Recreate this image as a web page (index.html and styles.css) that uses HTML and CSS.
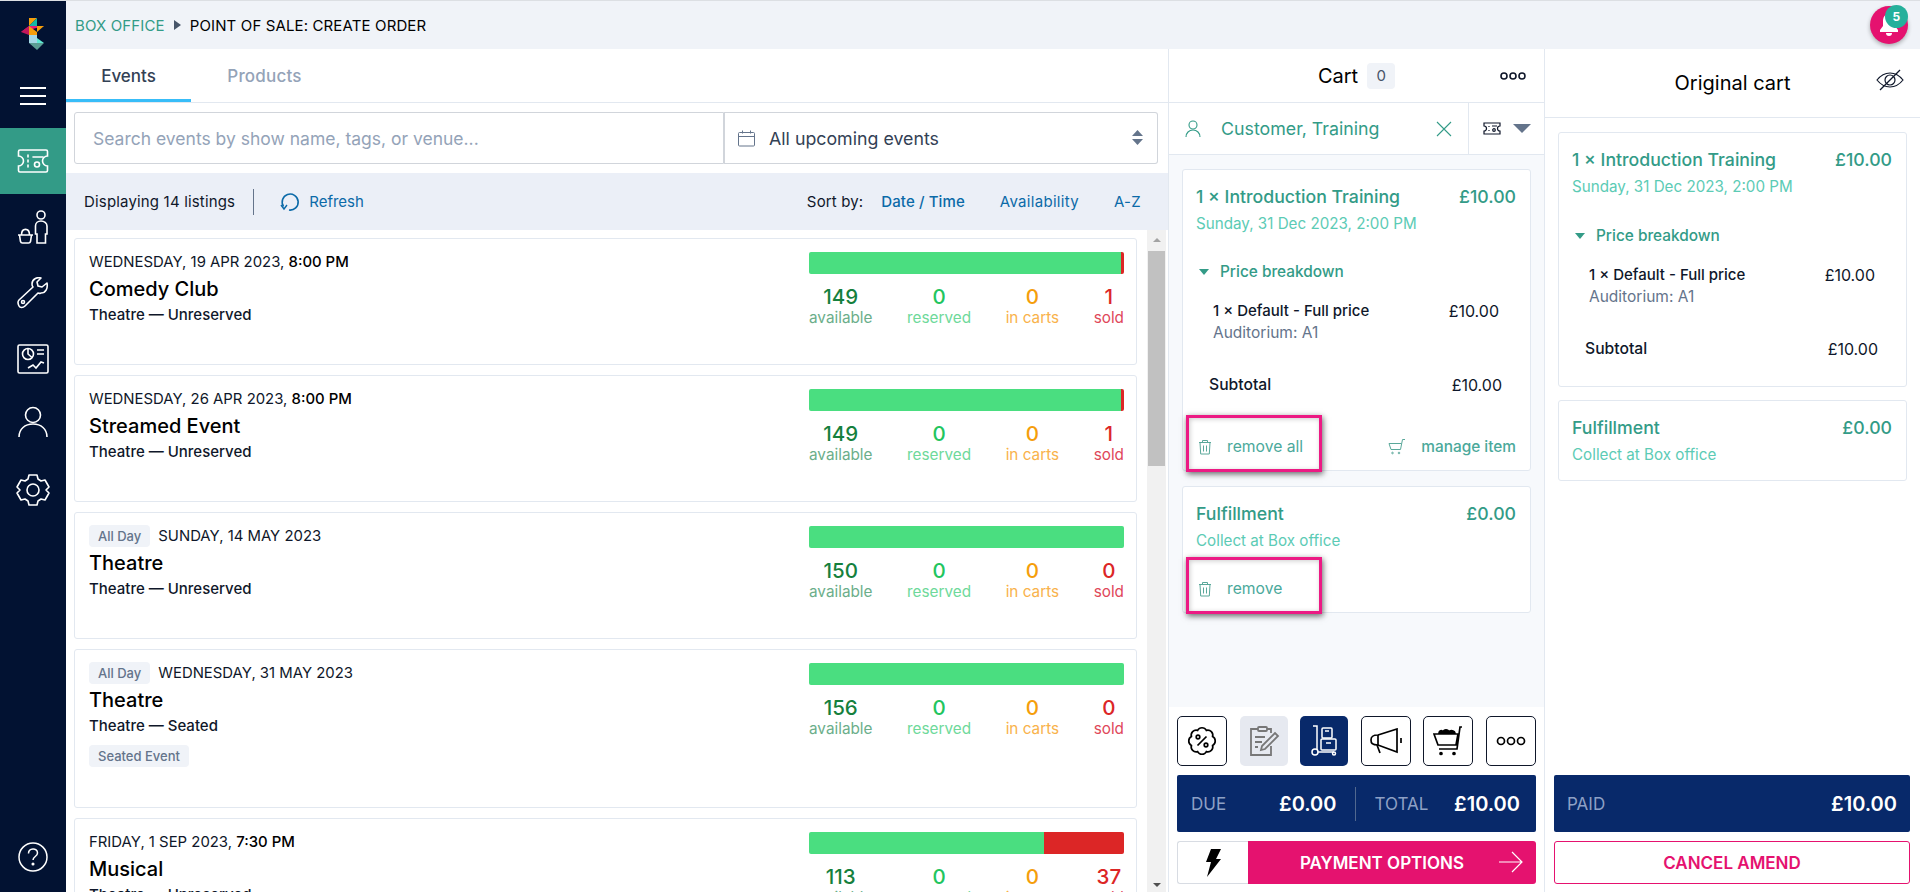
FILE: index.html
```html
<!DOCTYPE html>
<html lang="en">
<head>
<meta charset="utf-8">
<title>Point of sale: create order</title>
<link rel="stylesheet" href="styles.css">
</head>
<body>
<div class="app">
  <nav class="sidebar">
    <div class="logo">
      <svg width="24" height="32" viewBox="0 0 24 32"><polygon points="8,0 16,0 8,8" fill="#f59e0b"/><polygon points="16,0 16,8 8,8" fill="#14b8a6"/><polygon points="0,14 23,8 8,8" fill="#ec1a74"/><polygon points="0,14 8,17 8,8" fill="#c2185b"/><polygon points="8,8 8,17 16,17 16,8 23,8 16,14" fill="#f59e0b"/><polygon points="8,17 16,17 16,25 8,25" fill="#a5d8e6"/><polygon points="16,20 23,25 16,25" fill="#5eead4"/><polygon points="8,25 23,25 16,32" fill="#5b9e94"/></svg>
    </div>
    <div class="hamburger"><span></span><span></span><span></span></div>
    <a class="nav-item nav-active">
      <svg width="32" height="26" viewBox="0 0 32 26" fill="none" stroke="#fff" stroke-width="1.6"><path d="M3 2h26a1.500 1.500 0 0 1 1.500 1.500v4.500a5 5 0 0 0 0 10v4.500a1.500 1.500 0 0 1-1.500 1.500h-26a1.500 1.500 0 0 1-1.500-1.500v-4.500a5 5 0 0 0 0-10v-4.500a1.500 1.500 0 0 1 1.500-1.500z"/><path d="M11 7v2M11 12v2M11 17v2M16 9h10" stroke-linecap="round"/><circle cx="20" cy="16.500" r="2.500"/></svg>
    </a>
    <a class="nav-item">
      <svg width="32" height="34" viewBox="0 0 32 34" fill="none" stroke="#fff" stroke-width="1.6"><circle cx="24" cy="5" r="4"/><path d="M20 33V24h-1.500v-8c0-3 2.500-5 5.500-5s6 2 6 5v8h-1.500v9z"/><path d="M1 25h15M2.500 25l1 6.500a2 2 0 0 0 2 1.500h6a2 2 0 0 0 2-1.500l1-6.500"/><path d="M4.500 25c0-7.500 8-7.500 8 0"/></svg>
    </a>
    <a class="nav-item">
      <svg width="32" height="32" viewBox="0 0 32 32" fill="none" stroke="#fff" stroke-width="1.600" stroke-linejoin="round"><path d="M30 6l-5 4-4-1-1-4 4-4c-4-1-9 1-9 6 0 1 0 2 1 3L2 23c-2 2-1 4 0 6s4 2 6 0l13-13c1 0 2 1 3 0 5 0 7-5 6-10z"/><circle cx="6" cy="25" r="1.500"/></svg>
    </a>
    <a class="nav-item">
      <svg width="32" height="30" viewBox="0 0 32 30" fill="none" stroke="#fff" stroke-width="1.600"><rect x="1" y="1" width="30" height="28" rx="1.500"/><circle cx="11" cy="10" r="5.500"/><path d="M11 4.500V10l4 3.500M20 6h7M20 10h7" /><path d="M11 24l5-3 3 3 5-6 3 1"/></svg>
    </a>
    <a class="nav-item nav-user">
      <svg width="32" height="32" viewBox="0 0 32 32" fill="none" stroke="#fff" stroke-width="1.600"><circle cx="16" cy="9" r="7.500"/><path d="M2 31c0-8 6-13 14-13s14 5 14 13"/></svg>
    </a>
    <a class="nav-item nav-gear">
      <svg width="34" height="32" viewBox="0 0 34 32" fill="none" stroke="#fff" stroke-width="1.600" stroke-linejoin="round"><circle cx="17" cy="16" r="6"/><path d="M13 1h8l1 4 3 2 4-1 4 7-3 3v0l3 3-4 7-4-1-3 2-1 4h-8l-1-4-3-2-4 1-4-7 3-3-3-3 4-7 4 1 3-2z"/></svg>
    </a>
    <a class="nav-help">
      <svg width="30" height="30" viewBox="0 0 30 30" fill="none" stroke="#fff" stroke-width="1.500"><circle cx="15" cy="15" r="14"/><path d="M10.500 11.500c0-6 9-6 9-.5 0 3.500-4.500 3.500-4.500 7"/><circle cx="15" cy="22" r=".8" fill="#fff"/></svg>
    </a>
  </nav>

  <div class="main">
    <header class="topbar">
      <span class="crumb-link">BOX OFFICE</span>
      <span class="crumb-arrow"></span>
      <span class="crumb-current">POINT OF SALE: CREATE ORDER</span>
      <div class="bell">
        <svg width="22" height="24" viewBox="0 0 22 24" fill="#fff"><path d="M11 1c-4 0-6 3-6 7v5l-3 4v2h18v-2l-3-4V8c0-4-2-7-6-7z"/><path d="M8 20h6a3 3 0 0 1-6 0z"/></svg>
        <span class="bell-badge">5</span>
      </div>
    </header>

    <div class="columns">
      <section class="events">
        <div class="tabs">
          <a class="tab tab-active">Events</a>
          <a class="tab tab-next">Products</a>
        </div>
        <div class="search-row">
          <div class="search-box">Search events by show name, tags, or venue...</div>
          <div class="range-box">
            <svg width="18" height="17" viewBox="0 0 18 17" fill="none" stroke="#64748b" stroke-width="1"><rect x=".5" y="2.500" width="16" height="13.500" rx="1"/><path d="M.5 6.500h16M4.500 .5v3M12.500 .5v3"/></svg>
            <span class="range-text">All upcoming events</span>
            <svg class="updown" width="11" height="16" viewBox="0 0 11 16" fill="#64748b"><polygon points="5.500,0 11,6 0,6"/><polygon points="0,9 11,9 5.500,15"/></svg>
          </div>
        </div>
        <div class="list-toolbar">
          <span class="count">Displaying 14 listings</span>
          <span class="tool-sep"></span>
          <a class="refresh">
            <svg width="20" height="20" viewBox="0 0 20 20" fill="none" stroke="#0b6aa8" stroke-width="1.600"><path d="M3.500 14.500A8 8 0 1 1 9 18"/><path d="M1 13l3 4 3-4" stroke-width="1.400"/></svg>
            Refresh
          </a>
          <div class="sort">
            <span class="sort-label">Sort by:</span>
            <a class="sort-link sort-current">Date / Time</a>
            <a class="sort-link">Availability</a>
            <a class="sort-link">A-Z</a>
          </div>
        </div>
        <div class="list-wrap">
          <div class="list">
            <article class="event">
              <div class="event-info">
                <div class="event-date">WEDNESDAY, 19 APR 2023, <b>8:00 PM</b></div>
                <h3 class="event-title">Comedy Club</h3>
                <div class="event-venue">Theatre — Unreserved</div>
              </div>
              <div class="event-stats">
                <div class="bar"><span class="bar-green"></span><span class="bar-red bar-red-thin"></span></div>
                <div class="stats">
                  <div class="stat stat-available"><b>149</b><span>available</span></div>
                  <div class="stat stat-reserved"><b>0</b><span>reserved</span></div>
                  <div class="stat stat-carts"><b>0</b><span>in carts</span></div>
                  <div class="stat stat-sold"><b>1</b><span>sold</span></div>
                </div>
              </div>
            </article>
            <article class="event">
              <div class="event-info">
                <div class="event-date">WEDNESDAY, 26 APR 2023, <b>8:00 PM</b></div>
                <h3 class="event-title">Streamed Event</h3>
                <div class="event-venue">Theatre — Unreserved</div>
              </div>
              <div class="event-stats">
                <div class="bar"><span class="bar-green"></span><span class="bar-red bar-red-thin"></span></div>
                <div class="stats">
                  <div class="stat stat-available"><b>149</b><span>available</span></div>
                  <div class="stat stat-reserved"><b>0</b><span>reserved</span></div>
                  <div class="stat stat-carts"><b>0</b><span>in carts</span></div>
                  <div class="stat stat-sold"><b>1</b><span>sold</span></div>
                </div>
              </div>
            </article>
            <article class="event">
              <div class="event-info">
                <div class="event-date"><span class="pill pill-date">All Day</span>SUNDAY, 14 MAY 2023</div>
                <h3 class="event-title">Theatre</h3>
                <div class="event-venue">Theatre — Unreserved</div>
              </div>
              <div class="event-stats">
                <div class="bar"><span class="bar-green"></span></div>
                <div class="stats">
                  <div class="stat stat-available"><b>150</b><span>available</span></div>
                  <div class="stat stat-reserved"><b>0</b><span>reserved</span></div>
                  <div class="stat stat-carts"><b>0</b><span>in carts</span></div>
                  <div class="stat stat-sold"><b>0</b><span>sold</span></div>
                </div>
              </div>
            </article>
            <article class="event event-tall">
              <div class="event-info">
                <div class="event-date"><span class="pill pill-date">All Day</span>WEDNESDAY, 31 MAY 2023</div>
                <h3 class="event-title">Theatre</h3>
                <div class="event-venue">Theatre — Seated</div>
                <span class="pill pill-tag">Seated Event</span>
              </div>
              <div class="event-stats">
                <div class="bar"><span class="bar-green"></span></div>
                <div class="stats">
                  <div class="stat stat-available"><b>156</b><span>available</span></div>
                  <div class="stat stat-reserved"><b>0</b><span>reserved</span></div>
                  <div class="stat stat-carts"><b>0</b><span>in carts</span></div>
                  <div class="stat stat-sold"><b>0</b><span>sold</span></div>
                </div>
              </div>
            </article>
            <article class="event">
              <div class="event-info">
                <div class="event-date">FRIDAY, 1 SEP 2023, <b>7:30 PM</b></div>
                <h3 class="event-title">Musical</h3>
                <div class="event-venue">Theatre — Unreserved</div>
              </div>
              <div class="event-stats">
                <div class="bar"><span class="bar-green"></span><span class="bar-red bar-red-wide"></span></div>
                <div class="stats">
                  <div class="stat stat-available"><b>113</b><span>available</span></div>
                  <div class="stat stat-reserved"><b>0</b><span>reserved</span></div>
                  <div class="stat stat-carts"><b>0</b><span>in carts</span></div>
                  <div class="stat stat-sold"><b>37</b><span>sold</span></div>
                </div>
              </div>
            </article>
          </div>
          <div class="scrollbar">
            <span class="scroll-up"></span>
            <span class="scroll-thumb"></span>
            <span class="scroll-down"></span>
          </div>
        </div>
      </section>

      <section class="cart">
        <div class="panel-head">
          <span class="panel-title">Cart</span>
          <span class="cart-count">0</span>
          <svg class="dots" width="26" height="8" viewBox="0 0 26 8" fill="none" stroke="#0f172a" stroke-width="1.600"><circle cx="4" cy="4" r="3"/><circle cx="13" cy="4" r="3"/><circle cx="22" cy="4" r="3"/></svg>
        </div>
        <div class="customer-row">
          <div class="customer">
            <svg width="16" height="18" viewBox="0 0 16 18" fill="none" stroke="#339b87" stroke-width="1.100"><circle cx="8" cy="5" r="4"/><path d="M1 17c0-4 3-7 7-7s7 3 7 7"/></svg>
            <span class="customer-name">Customer, Training</span>
            <svg class="customer-x" width="16" height="16" viewBox="0 0 16 16" stroke="#339b87" stroke-width="1.100"><path d="M1 1l14 14M15 1L1 15"/></svg>
          </div>
          <div class="cart-type">
            <svg width="18" height="13" viewBox="0 0 18 13" fill="none" stroke="#0f172a" stroke-width="1.200"><path d="M1 1h16v3a2.500 2.500 0 0 0 0 5v3H1V9a2.500 2.500 0 0 0 0-5z"/><path d="M6 4v1M6 8v1M9 4h5"/><circle cx="11" cy="8" r="1.300"/></svg>
            <span class="caret-down"></span>
          </div>
        </div>
        <div class="cart-body">
          <div class="item item-main">
            <div class="item-head"><span>1 × Introduction Training</span><span>£10.00</span></div>
            <div class="item-sub">Sunday, 31 Dec 2023, 2:00 PM</div>
            <div class="breakdown"><span class="caret-teal"></span>Price breakdown</div>
            <div class="line"><span>1 × Default - Full price</span><span>£10.00</span></div>
            <div class="line-sub">Auditorium: A1</div>
            <div class="subtotal"><span>Subtotal</span><span>£10.00</span></div>
            <div class="item-actions">
              <a class="action">
                <svg width="14" height="16" viewBox="0 0 14 16" fill="none" stroke="#5aa89a" stroke-width="1"><path d="M1 3.500h12M4.500 3.500V1.500h5v2M2 3.500l.7 11.500h8.600L12 3.500M5.500 6.500v6M8.500 6.500v6"/></svg>
                <span>remove all</span>
              </a>
              <a class="action">
                <svg width="18" height="16" viewBox="0 0 18 16" fill="none" stroke="#5aa89a" stroke-width="1"><path d="M17 .5h-2.500l-2 10H3L1 4.500h12.500"/><circle cx="4.500" cy="14" r=".8"/><circle cx="11" cy="14" r=".8"/></svg>
                <span class="action-manage">manage item</span>
              </a>
            </div>
            <div class="callout"></div>
          </div>
          <div class="item item-fulfil">
            <div class="item-head"><span>Fulfillment</span><span>£0.00</span></div>
            <div class="item-sub">Collect at Box office</div>
            <div class="item-actions item-actions-single">
              <a class="action">
                <svg width="14" height="16" viewBox="0 0 14 16" fill="none" stroke="#5aa89a" stroke-width="1"><path d="M1 3.500h12M4.500 3.500V1.500h5v2M2 3.500l.7 11.500h8.600L12 3.500M5.500 6.500v6M8.500 6.500v6"/></svg>
                <span>remove</span>
              </a>
            </div>
            <div class="callout"></div>
          </div>
        </div>
        <div class="cart-foot">
          <div class="tools">
            <a class="tool">
              <svg width="30" height="30" viewBox="0 0 30 30" fill="none" stroke="#000" stroke-width="1.700"><path d="M25.600 10.600A5 5 0 0 0 19.400 4.400A5 5 0 0 0 10.600 4.400A5 5 0 0 0 4.400 10.600A5 5 0 0 0 4.400 19.400A5 5 0 0 0 10.600 25.600A5 5 0 0 0 19.400 25.600A5 5 0 0 0 25.600 19.400A5 5 0 0 0 25.600 10.600z"/><path d="M10.500 19.500l9-9"/><circle cx="11" cy="11" r="1.800"/><circle cx="19" cy="19" r="1.800"/></svg>
            </a>
            <a class="tool tool-muted">
              <svg width="32" height="32" viewBox="0 0 32 32" fill="none" stroke="#777" stroke-width="1.800"><path d="M10 4H3v26h20V21M19 4h4v4"/><rect x="10" y="2" width="9" height="4" rx="1"/><path d="M7 12h10M7 17h7M7 22h3"/><path d="M13 25l1-4L27 8l3 3-13 13z"/></svg>
            </a>
            <a class="tool tool-on">
              <svg width="28" height="32" viewBox="0 0 28 32" fill="none" stroke="#fff" stroke-width="1.500"><path d="M3 1h4v24"/><circle cx="5" cy="27" r="3"/><path d="M8 27h16"/><circle cx="24" cy="28.500" r="1.500"/><rect x="12" y="3" width="10" height="10" rx="1"/><rect x="11" y="14" width="15" height="11" rx="1"/><path d="M15 6h4M16 18h5"/></svg>
            </a>
            <a class="tool">
              <svg width="32" height="26" viewBox="0 0 32 26" fill="none" stroke="#000" stroke-width="1.700"><path d="M8 7L27 1v23L8 17c-6 0-7-2-7-5s1-5 7-5z"/><path d="M8 7v10M7 17l3 8M31 10v5"/></svg>
            </a>
            <a class="tool">
              <svg width="30" height="30" viewBox="0 0 30 30" fill="none" stroke="#000" stroke-width="1.700"><path d="M29 1h-2l-3 22H6M1 8h24l-2 11H5z"/><path d="M6 8c0-4 3-4 4-2 1-3 5-3 6 0 1-2 6-2 6 2" fill="#000"/><circle cx="8" cy="27.500" r="1" fill="#000"/><circle cx="21" cy="27.500" r="1" fill="#000"/></svg>
            </a>
            <a class="tool">
              <svg width="30" height="10" viewBox="0 0 30 10" fill="none" stroke="#000" stroke-width="1.700"><circle cx="5" cy="5" r="3.500"/><circle cx="15" cy="5" r="3.500"/><circle cx="25" cy="5" r="3.500"/></svg>
            </a>
          </div>
          <div class="totals">
            <div class="total-part"><span class="total-label">DUE</span><span class="total-value">£0.00</span></div>
            <span class="total-sep"></span>
            <div class="total-part"><span class="total-label">TOTAL</span><span class="total-value">£10.00</span></div>
          </div>
          <div class="pay-row">
            <a class="flash">
              <svg width="15" height="28" viewBox="0 0 15 28" fill="#000"><polygon points="5,0 15,0 10,10 15,10 1,28 5,13 0,13"/></svg>
            </a>
            <a class="pay">
              <span>PAYMENT OPTIONS</span>
              <svg class="pay-arrow" width="24" height="22" viewBox="0 0 24 22" fill="none" stroke="#fff" stroke-width="1.200"><path d="M0 11h23M13 1l10 10-10 10"/></svg>
            </a>
          </div>
        </div>
      </section>

      <section class="original">
        <div class="panel-head panel-head-orig">
          <span class="panel-title">Original cart</span>
          <svg class="eye" width="28" height="22" viewBox="0 0 28 22" fill="none" stroke="#0f172a" stroke-width="1.200"><path d="M1 11c4-5 8-7 13-7s9 2 13 7c-4 5-8 7-13 7s-9-2-13-7z"/><circle cx="14" cy="11" r="5"/><path d="M4 21L24 1"/></svg>
        </div>
        <div class="orig-body">
          <div class="item item-orig">
            <div class="item-head"><span>1 × Introduction Training</span><span>£10.00</span></div>
            <div class="item-sub">Sunday, 31 Dec 2023, 2:00 PM</div>
            <div class="breakdown"><span class="caret-teal"></span>Price breakdown</div>
            <div class="line"><span>1 × Default - Full price</span><span>£10.00</span></div>
            <div class="line-sub">Auditorium: A1</div>
            <div class="subtotal"><span>Subtotal</span><span>£10.00</span></div>
          </div>
          <div class="item item-orig-fulfil">
            <div class="item-head"><span>Fulfillment</span><span>£0.00</span></div>
            <div class="item-sub">Collect at Box office</div>
          </div>
        </div>
        <div class="orig-foot">
          <div class="totals totals-paid"><div class="total-part"><span class="total-label">PAID</span><span class="total-value">£10.00</span></div></div>
          <a class="cancel">CANCEL AMEND</a>
        </div>
      </section>
    </div>
  </div>
</div>
</body>
</html>
```
FILE: styles.css
```css
* { box-sizing: border-box; }
html, body { margin: 0; height: 892px; overflow: hidden; }
body { font-family: Inter, "Noto Sans", sans-serif; font-size: 15px; color: #0f172a; background: #fff; }
a { display: inline-flex; align-items: center; }
.app { display: flex; height: 892px; border-top: 1px solid #dcdfe3; }

.sidebar { width: 66px; flex: none; background: #021232; display: flex; flex-direction: column; align-items: stretch; }
.logo { height: 64px; display: flex; justify-content: center; padding-top: 17px; }
.hamburger { height: 63px; padding-top: 22px; display: flex; flex-direction: column; align-items: center; gap: 6px; }
.hamburger span { width: 26px; height: 2px; background: #fff; }
.nav-item { height: 66px; justify-content: center; }
.nav-active { background: #339b87; }
.nav-user { height: 59px; }
.nav-gear { height: 57px; margin-top: 10px; }
.nav-help { margin-top: auto; margin-bottom: 20px; justify-content: center; }

.main { flex: 1; min-width: 0; display: flex; flex-direction: column; }
.topbar { height: 48px; flex: none; background: #f0f3f8; display: flex; align-items: center; padding: 0 12px 0 9px; font-size: 15px; letter-spacing: .13px; }
.crumb-link { color: #339b87; }
.crumb-arrow { width: 0; height: 0; margin: 0 9px 0 9px; border-left: 7px solid #475569; border-top: 5.500px solid transparent; border-bottom: 5.500px solid transparent; }
.crumb-current { color: #000; }
.bell { position: relative; margin-left: auto; width: 38px; height: 38px; border-radius: 50%; background: #e5126f; box-shadow: 0 2px 4px rgba(0,0,0,.3); display: flex; align-items: center; justify-content: center; }
.bell-badge { position: absolute; top: -1px; right: 0; width: 23px; height: 23px; border-radius: 50%; background: #25b09b; color: #fff; font-size: 12px; font-weight: 700; display: flex; align-items: center; justify-content: center; }

.columns { flex: 1; min-height: 0; display: flex; }
.events { width: 1103px; flex: none; display: flex; flex-direction: column; border-right: 1px solid #e2e8f0; }
.tabs { height: 54px; flex: none; display: flex; border-bottom: 1px solid #e2e8f0; }
.tab { width: 125px; height: 53px; justify-content: center; font-size: 17px; font-weight: 500; color: #94a3b8; }
.tab-next { margin-left: 11px; letter-spacing: .2px; }
.tab-active { color: #334155; border-bottom: 3px solid #38bdf8; padding-top: 3px; }
.search-row { height: 70px; flex: none; padding: 9px 10px 9px 8px; display: flex; }
.search-box { width: 650px; height: 52px; border: 1px solid #d1d5db; border-radius: 3px 0 0 3px; display: flex; align-items: center; padding-left: 18px; font-size: 17.500px; color: #94a3b8; }
.range-box { flex: 1; height: 52px; border: 1px solid #d1d5db; border-left: 0; border-radius: 0 3px 3px 0; display: flex; align-items: center; padding: 0 14px 0 14px; box-shadow: inset 1px 0 0 #d1d5db; }
.range-text { margin-left: 13px; font-size: 17.800px; color: #334155; }
.updown { margin-left: auto; }
.list-toolbar { height: 57px; flex: none; background: #ebeff7; display: flex; align-items: center; padding: 0 27px 0 18px; }
.count { color: #0f172a; letter-spacing: .17px; }
.tool-sep { width: 1px; height: 26px; background: #64748b; margin: 0 26px 0 18px; }
.refresh { gap: 9px; color: #0b6aa8; }
.sort { margin-left: auto; display: flex; align-items: center; }
.sort-label { margin-right: 18px; letter-spacing: .15px; }
.sort-link { color: #0b6aa8; margin-left: 35px; letter-spacing: .3px; }
.sort-label + .sort-link { margin-left: 0; letter-spacing: .1px; }
.sort-current { font-weight: 500; }

.list-wrap { flex: 1; min-height: 0; display: flex; }
.list { flex: 1; min-width: 0; overflow: hidden; padding: 8px 10px 0 8px; display: flex; flex-direction: column; gap: 10px; }
.event { flex: none; height: 127px; border: 1px solid #e2e8f0; border-radius: 3px; display: flex; justify-content: space-between; padding: 13px 12px 0 14px; }
.event-tall { height: 159px; }
.event-date { height: 20px; display: flex; align-items: center; white-space: pre; font-size: 14.900px; color: #0f172a; }
.event-date b { font-weight: 500; color: #000; }
.event-title { margin: 4px 0 0; font-size: 20px; line-height: 26px; font-weight: 500; color: #000; }
.event-venue { margin-top: 3px; line-height: 20px; font-weight: 500; font-size: 15px; color: #0f172a; }
.pill { display: inline-flex; align-items: center; height: 22px; padding: 0 9px; border-radius: 4px; background: #f0f3f8; color: #64748b; font-size: 13px; font-weight: 500; }
.pill-date { margin-right: 8px; }
.pill-tag { margin-top: 9px; }
.event-stats { width: 315px; flex: none; }
.bar { height: 22px; display: flex; border-radius: 2px; overflow: hidden; }
.bar-green { flex: 1; background: #4ade80; }
.bar-red { background: #dc2626; }
.bar-red-thin { width: 3px; }
.bar-red-wide { width: 80px; }
.stats { display: flex; justify-content: space-between; margin-top: 12px; }
.stat { display: flex; flex-direction: column; align-items: center; }
.stat b { font-size: 20.500px; line-height: 22px; font-weight: 500; }
.stat span { font-size: 15.300px; line-height: 20px; }
.stat-available b { color: #15803d; }
.stat-available span { color: #6bae8a; }
.stat-reserved b { color: #22c55e; }
.stat-reserved span { color: #6ed99a; }
.stat-carts b { color: #f59e0b; }
.stat-carts span { color: #f9b24b; }
.stat-sold b { color: #dc2626; }
.stat-sold span { color: #e0475a; }

.scrollbar { width: 19px; flex: none; background: #f1f1f1; display: flex; flex-direction: column; align-items: center; margin-right: 2px; }
.scroll-up { width: 0; height: 0; margin: 8px 0 9px; border: 4.500px solid transparent; border-top: 0; border-bottom: 4.500px solid #a3a3a3; }
.scroll-thumb { width: 17px; height: 215px; background: #c1c1c1; }
.scroll-down { width: 0; height: 0; margin: auto 0 5px; border: 4.500px solid transparent; border-bottom: 0; border-top: 4.500px solid #505050; }

.cart { width: 376px; flex: none; display: flex; flex-direction: column; border-right: 1px solid #e2e8f0; }
.panel-head { position: relative; height: 54px; flex: none; display: flex; align-items: center; justify-content: center; border-bottom: 1px solid #e2e8f0; }
.panel-title { font-size: 20px; color: #000; }
.cart-count { width: 28px; height: 26px; margin-left: 9px; border-radius: 4px; background: #f0f3f8; color: #475569; display: flex; align-items: center; justify-content: center; font-size: 15px; }
.dots { position: absolute; right: 18px; top: 23px; }
.customer-row { height: 52px; flex: none; display: flex; border-bottom: 1px solid #e2e8f0; }
.customer { flex: 1; display: flex; align-items: center; padding: 0 16px 0 16px; border-right: 1px solid #e2e8f0; }
.customer-name { margin-left: 20px; font-size: 17.800px; color: #339b87; }
.customer-x { margin-left: auto; }
.cart-type { width: 75px; flex: none; display: flex; align-items: center; padding-left: 14px; }
.caret-down { margin-left: 12px; width: 0; height: 0; border-left: 9px solid transparent; border-right: 9px solid transparent; border-top: 9px solid #64748b; }
.cart-body { flex: 1; min-height: 0; background: #f7f9fc; padding: 14px 13px 0; display: flex; flex-direction: column; gap: 15px; }
.item { position: relative; background: #fff; border: 1px solid #e2e8f0; border-radius: 3px; padding: 14px 14px 0 13px; }
.item-main { height: 302px; }
.item-fulfil { height: 127px; }
.item-head { display: flex; justify-content: space-between; font-size: 17.700px; line-height: 26px; font-weight: 500; color: #339b87; }
.item-sub { margin-top: 3px; font-size: 15.200px; line-height: 22px; color: #5ccbb5; }
.breakdown { margin-top: 26px; padding-left: 3px; display: flex; align-items: center; font-size: 15.400px; line-height: 22px; font-weight: 500; color: #339b87; }
.item-orig .breakdown { margin-top: 27px; }
.caret-teal { width: 0; height: 0; margin-right: 11px; border-left: 5.500px solid transparent; border-right: 5.500px solid transparent; border-top: 6px solid #339b87; }
.line { margin-top: 17px; padding: 0 17px 0 17px; display: flex; justify-content: space-between; font-size: 15px; line-height: 22px; font-weight: 500; color: #0f172a; }
.line span:last-child { font-size: 16px; font-weight: 400; }
.line-sub { padding-left: 17px; font-size: 15.500px; line-height: 22px; color: #64748b; }
.subtotal { margin-top: 30px; padding: 0 14px 0 13px; display: flex; justify-content: space-between; font-size: 15.700px; line-height: 22px; font-weight: 500; color: #0f172a; }
.subtotal span:last-child { font-size: 16px; font-weight: 400; }
.item-actions { position: absolute; left: 15px; right: 14px; bottom: 12px; display: flex; justify-content: space-between; }
.action { gap: 15px; font-size: 15.700px; line-height: 22px; color: #4ba99b; }
.action-manage { font-size: 15.400px; font-weight: 500; }
.callout { position: absolute; left: 3px; bottom: -2px; width: 136px; height: 57px; border: 3px solid #ec1a84; box-shadow: 1px 2px 6px rgba(0,0,0,.6), inset 1px 1px 5px rgba(0,0,0,.2); }
.cart-foot { height: 185px; flex: none; background: #fff; padding: 9px 8px 0; }
.tools { display: flex; justify-content: space-between; }
.tool { width: 50px; height: 50px; justify-content: center; border: 1px solid #0f172a; border-radius: 5px; }
.tool-muted { width: 48px; border: 0; background: #e6e9f0; }
.tool-on { width: 48px; border: 0; background: #08296a; }
.totals { margin-top: 9px; height: 57px; background: #08296a; border-radius: 2px; display: flex; align-items: center; padding: 0 16px 0 14px; }
.total-part { flex: 1; display: flex; align-items: center; justify-content: space-between; }
.total-label { font-size: 17px; color: #8ea0c5; }
.total-value { font-size: 20px; font-weight: 600; color: #fff; }
.total-sep { width: 1px; height: 34px; background: #51688f; margin: 0 19px 0 18px; }
.pay-row { margin-top: 9px; height: 43px; display: flex; }
.flash { width: 71px; justify-content: center; border: 1px solid #d8dce3; border-right: 0; border-radius: 3px 0 0 3px; }
.pay { position: relative; flex: 1; justify-content: center; background: #e5126f; border-radius: 0 3px 3px 0; color: #fff; font-size: 17px; font-weight: 600; padding-right: 20px; }
.pay-arrow { position: absolute; right: 13px; top: 10px; }

.original { flex: 1; min-width: 0; display: flex; flex-direction: column; }
.panel-head-orig { height: 69px; }
.eye { position: absolute; right: 16px; top: 20px; }
.orig-body { flex: 1; min-height: 0; padding: 14px 13px 0; display: flex; flex-direction: column; gap: 13px; }
.item-orig { height: 255px; }
.item-orig-fulfil { height: 81px; }
.orig-foot { flex: none; height: 126px; padding: 0 10px 0 9px; }
.totals-paid { padding: 0 13px; }
.cancel { margin-top: 9px; height: 43px; width: 100%; justify-content: center; border: 1px solid #e5126f; border-radius: 3px; color: #e5126f; font-size: 17px; font-weight: 600; }
```
